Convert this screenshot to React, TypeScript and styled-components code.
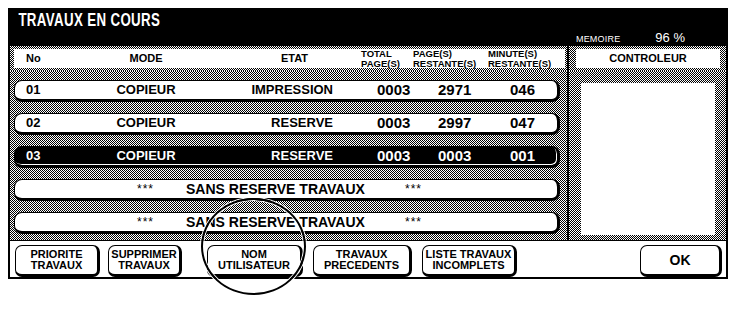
import React from 'react';
import styled, { createGlobalStyle, css } from 'styled-components';

const GlobalStyle = createGlobalStyle`
  html, body {
    margin: 0;
    padding: 0;
    background: #fff;
  }
  body {
    font-family: "Liberation Sans", Arial, sans-serif;
    color: #000;
  }
`;

const dither = css`
  background: repeating-conic-gradient(#000 0% 25%, #fff 0% 50%) 0 0 / 2px 2px;
`;

type Job = {
  no: string;
  mode: string;
  etat: string;
  total: string;
  pages: string;
  minutes: string;
  selected?: boolean;
};

const jobs: Job[] = [
  { no: '01', mode: 'COPIEUR', etat: 'IMPRESSION', total: '0003', pages: '2971', minutes: '046' },
  { no: '02', mode: 'COPIEUR', etat: 'RESERVE', total: '0003', pages: '2997', minutes: '047' },
  { no: '03', mode: 'COPIEUR', etat: 'RESERVE', total: '0003', pages: '0003', minutes: '001', selected: true },
];

const keys = [
  { w: 85, gap: 0, lines: ['PRIORITE', 'TRAVAUX'] },
  { w: 74, gap: 8, lines: ['SUPPRIMER', 'TRAVAUX'] },
  { w: 96, gap: 25, lines: ['NOM', 'UTILISATEUR'] },
  { w: 99, gap: 10, lines: ['TRAVAUX', 'PRECEDENTS'] },
  { w: 95, gap: 10, lines: ['LISTE TRAVAUX', 'INCOMPLETS'] },
];

export default function App() {
  return (
    <Page>
      <GlobalStyle />
      <Screen>
        <TopBar>
          <Title>TRAVAUX EN COURS</Title>
          <Memory>
            <MemLabel>MEMOIRE</MemLabel>
            <MemValue>96 %</MemValue>
          </Memory>
        </TopBar>

        <Middle>
          <JobPanel>
            <HeadBand>
              <HeadStrip>
                <HeadCell $pl={12}>No</HeadCell>
                <HeadCell $align="center">MODE</HeadCell>
                <HeadCell $align="right" $pr={42}>ETAT</HeadCell>
                <HeadCell $pl={11} $stack>TOTAL<br />PAGE(S)</HeadCell>
                <HeadCell $pl={1} $stack>PAGE(S)<br />RESTANTE(S)</HeadCell>
                <HeadCell $pl={2} $stack>MINUTE(S)<br />RESTANTE(S)</HeadCell>
              </HeadStrip>
            </HeadBand>

            <RowsArea>
              {jobs.map((j) => (
                <JobRow key={j.no} $selected={j.selected}>
                  <Cell $pl={11}>{j.no}</Cell>
                  <Cell $align="center">{j.mode}</Cell>
                  <Cell $align="right" $pr={17}>{j.etat}</Cell>
                  <Cell $pl={27} $num>{j.total}</Cell>
                  <Cell $pl={26} $num>{j.pages}</Cell>
                  <Cell $pl={24} $num>{j.minutes}</Cell>
                </JobRow>
              ))}
              {[0, 1].map((i) => (
                <EmptyRow key={i}>
                  <Stars>***</Stars>
                  <EmptyText>SANS RESERVE TRAVAUX</EmptyText>
                  <Stars>***</Stars>
                </EmptyRow>
              ))}
            </RowsArea>
          </JobPanel>

          <ControlPanel>
            <HeadBand $right>
              <ControlHead>CONTROLEUR</ControlHead>
            </HeadBand>
            <ControlBody>
              <ControlScreen />
            </ControlBody>
          </ControlPanel>
        </Middle>

        <KeyBar>
          {keys.map((k) => (
            <SoftKey key={k.lines[0] + k.lines[1]} $w={k.w} $gap={k.gap}>
              {k.lines[0]}
              <br />
              {k.lines[1]}
            </SoftKey>
          ))}
          <OkKey>OK</OkKey>
        </KeyBar>
      </Screen>
      <Highlight />
    </Page>
  );
}

const Page = styled.div`
  position: relative;
  width: 729px;
  height: 312px;
  padding: 8px 0 0 8px;
  box-sizing: border-box;
`;

const Screen = styled.div`
  width: 720px;
  height: 271px;
  box-sizing: border-box;
  border: 2px solid #000;
  display: flex;
  flex-direction: column;
  background: #fff;
`;

const TopBar = styled.header`
  flex: none;
  height: 36px;
  background: #000;
  color: #fff;
  display: flex;
  justify-content: space-between;
`;

const Title = styled.h1`
  margin: 0;
  padding-left: 12px;
  font: bold 19px/20px "Liberation Sans", Arial, sans-serif;
  letter-spacing: 0.5px;
  white-space: nowrap;
  transform: scaleX(0.7);
  transform-origin: left center;
`;

const Memory = styled.div`
  align-self: flex-end;
  display: flex;
  align-items: baseline;
  gap: 35px;
  padding: 0 41px 1px 0;
`;

const MemLabel = styled.span`
  font: 9px/12px "Liberation Sans", Arial, sans-serif;
  letter-spacing: 0.2px;
`;

const MemValue = styled.span`
  font: 13px/14px "Liberation Sans", Arial, sans-serif;
`;

const Middle = styled.div`
  flex: none;
  height: 194px;
  display: flex;
`;

const JobPanel = styled.section`
  width: 557px;
  border-right: 2px solid #000;
  display: flex;
  flex-direction: column;
`;

const HeadBand = styled.div<{ $right?: boolean }>`
  ${dither};
  flex: none;
  height: 25px;
  box-sizing: border-box;
  padding: ${(p) => (p.$right ? '3px 6px 3px 7px' : '3px 2px 3px 4px')};
  display: flex;
`;

const HeadStrip = styled.div`
  flex: 1;
  background: #fff;
  display: grid;
  grid-template-columns: 92px 80px 164px 62px 74px 1fr;
  align-items: center;
`;

const HeadCell = styled.div<{ $pl?: number; $pr?: number; $align?: string; $stack?: boolean }>`
  padding-left: ${(p) => p.$pl ?? 0}px;
  padding-right: ${(p) => p.$pr ?? 0}px;
  text-align: ${(p) => p.$align ?? 'left'};
  font-weight: bold;
  font-size: ${(p) => (p.$stack ? '9.5px' : '11px')};
  line-height: ${(p) => (p.$stack ? '9.5px' : '13px')};
  white-space: nowrap;
`;

const RowsArea = styled.div`
  ${dither};
  flex: 1;
  padding: 9px 0 0 4px;
  display: flex;
  flex-direction: column;
  gap: 11px;
`;

const rowShape = css`
  width: 546px;
  height: 22px;
  box-sizing: border-box;
  border: 1px solid #000;
  border-right-width: 3px;
  border-bottom-width: 3px;
  border-radius: 8px;
  flex: none;
`;

const JobRow = styled.div<{ $selected?: boolean }>`
  ${rowShape};
  background: ${(p) => (p.$selected ? '#000' : '#fff')};
  color: ${(p) => (p.$selected ? '#fff' : '#000')};
  box-shadow: ${(p) => (p.$selected ? 'inset -1px -1px 0 #fff' : 'none')};
  display: grid;
  grid-template-columns: 91px 80px 164px 62px 74px 1fr;
  align-items: center;
`;

const Cell = styled.div<{ $pl?: number; $pr?: number; $align?: string; $num?: boolean }>`
  padding-left: ${(p) => p.$pl ?? 0}px;
  padding-right: ${(p) => p.$pr ?? 0}px;
  text-align: ${(p) => p.$align ?? 'left'};
  font-weight: bold;
  font-size: ${(p) => (p.$num ? '15px' : '13px')};
  line-height: 16px;
  white-space: nowrap;
`;

const EmptyRow = styled.div`
  ${rowShape};
  background: #fff;
  display: grid;
  grid-template-columns: 49px 219px auto;
  align-items: center;
  padding-left: 122px;
`;

const Stars = styled.span`
  font-size: 12px;
  letter-spacing: 1px;
  line-height: 16px;
`;

const EmptyText = styled.span`
  font: bold 14px/16px "Liberation Sans", Arial, sans-serif;
  white-space: nowrap;
`;

const ControlPanel = styled.section`
  flex: 1;
  display: flex;
  flex-direction: column;
`;

const ControlHead = styled.div`
  flex: 1;
  background: #fff;
  display: flex;
  align-items: center;
  justify-content: center;
  font: bold 11px/13px "Liberation Sans", Arial, sans-serif;
`;

const ControlBody = styled.div`
  ${dither};
  flex: 1;
  padding: 12px 11px 5px 12px;
  display: flex;
`;

const ControlScreen = styled.div`
  flex: 1;
  background: #fff;
`;

const KeyBar = styled.footer`
  flex: 1;
  box-sizing: border-box;
  border-top: 1px solid #000;
  padding: 4px 4px 0 5px;
  display: flex;
  align-items: flex-start;
`;

const keyShape = css`
  height: 32px;
  box-sizing: border-box;
  border: 1px solid #000;
  border-right-width: 3px;
  border-bottom-width: 3px;
  border-radius: 7px;
  background: #fff;
  color: #000;
  padding: 0;
  font-family: "Liberation Sans", Arial, sans-serif;
  font-weight: bold;
  white-space: nowrap;
`;

const SoftKey = styled.button<{ $w: number; $gap: number }>`
  ${keyShape};
  width: ${(p) => p.$w}px;
  margin-left: ${(p) => p.$gap}px;
  font-size: 11px;
  line-height: 11px;
`;

const OkKey = styled.button`
  ${keyShape};
  width: 82px;
  margin-left: auto;
  font-size: 14px;
`;

const Highlight = styled.div`
  position: absolute;
  left: 201px;
  top: 198px;
  width: 105px;
  height: 97px;
  box-sizing: border-box;
  border: 2px solid #000;
  border-radius: 50%;
  box-shadow: 0 0 0 1px #fff, inset 0 0 0 1px #fff;
  pointer-events: none;
`;
